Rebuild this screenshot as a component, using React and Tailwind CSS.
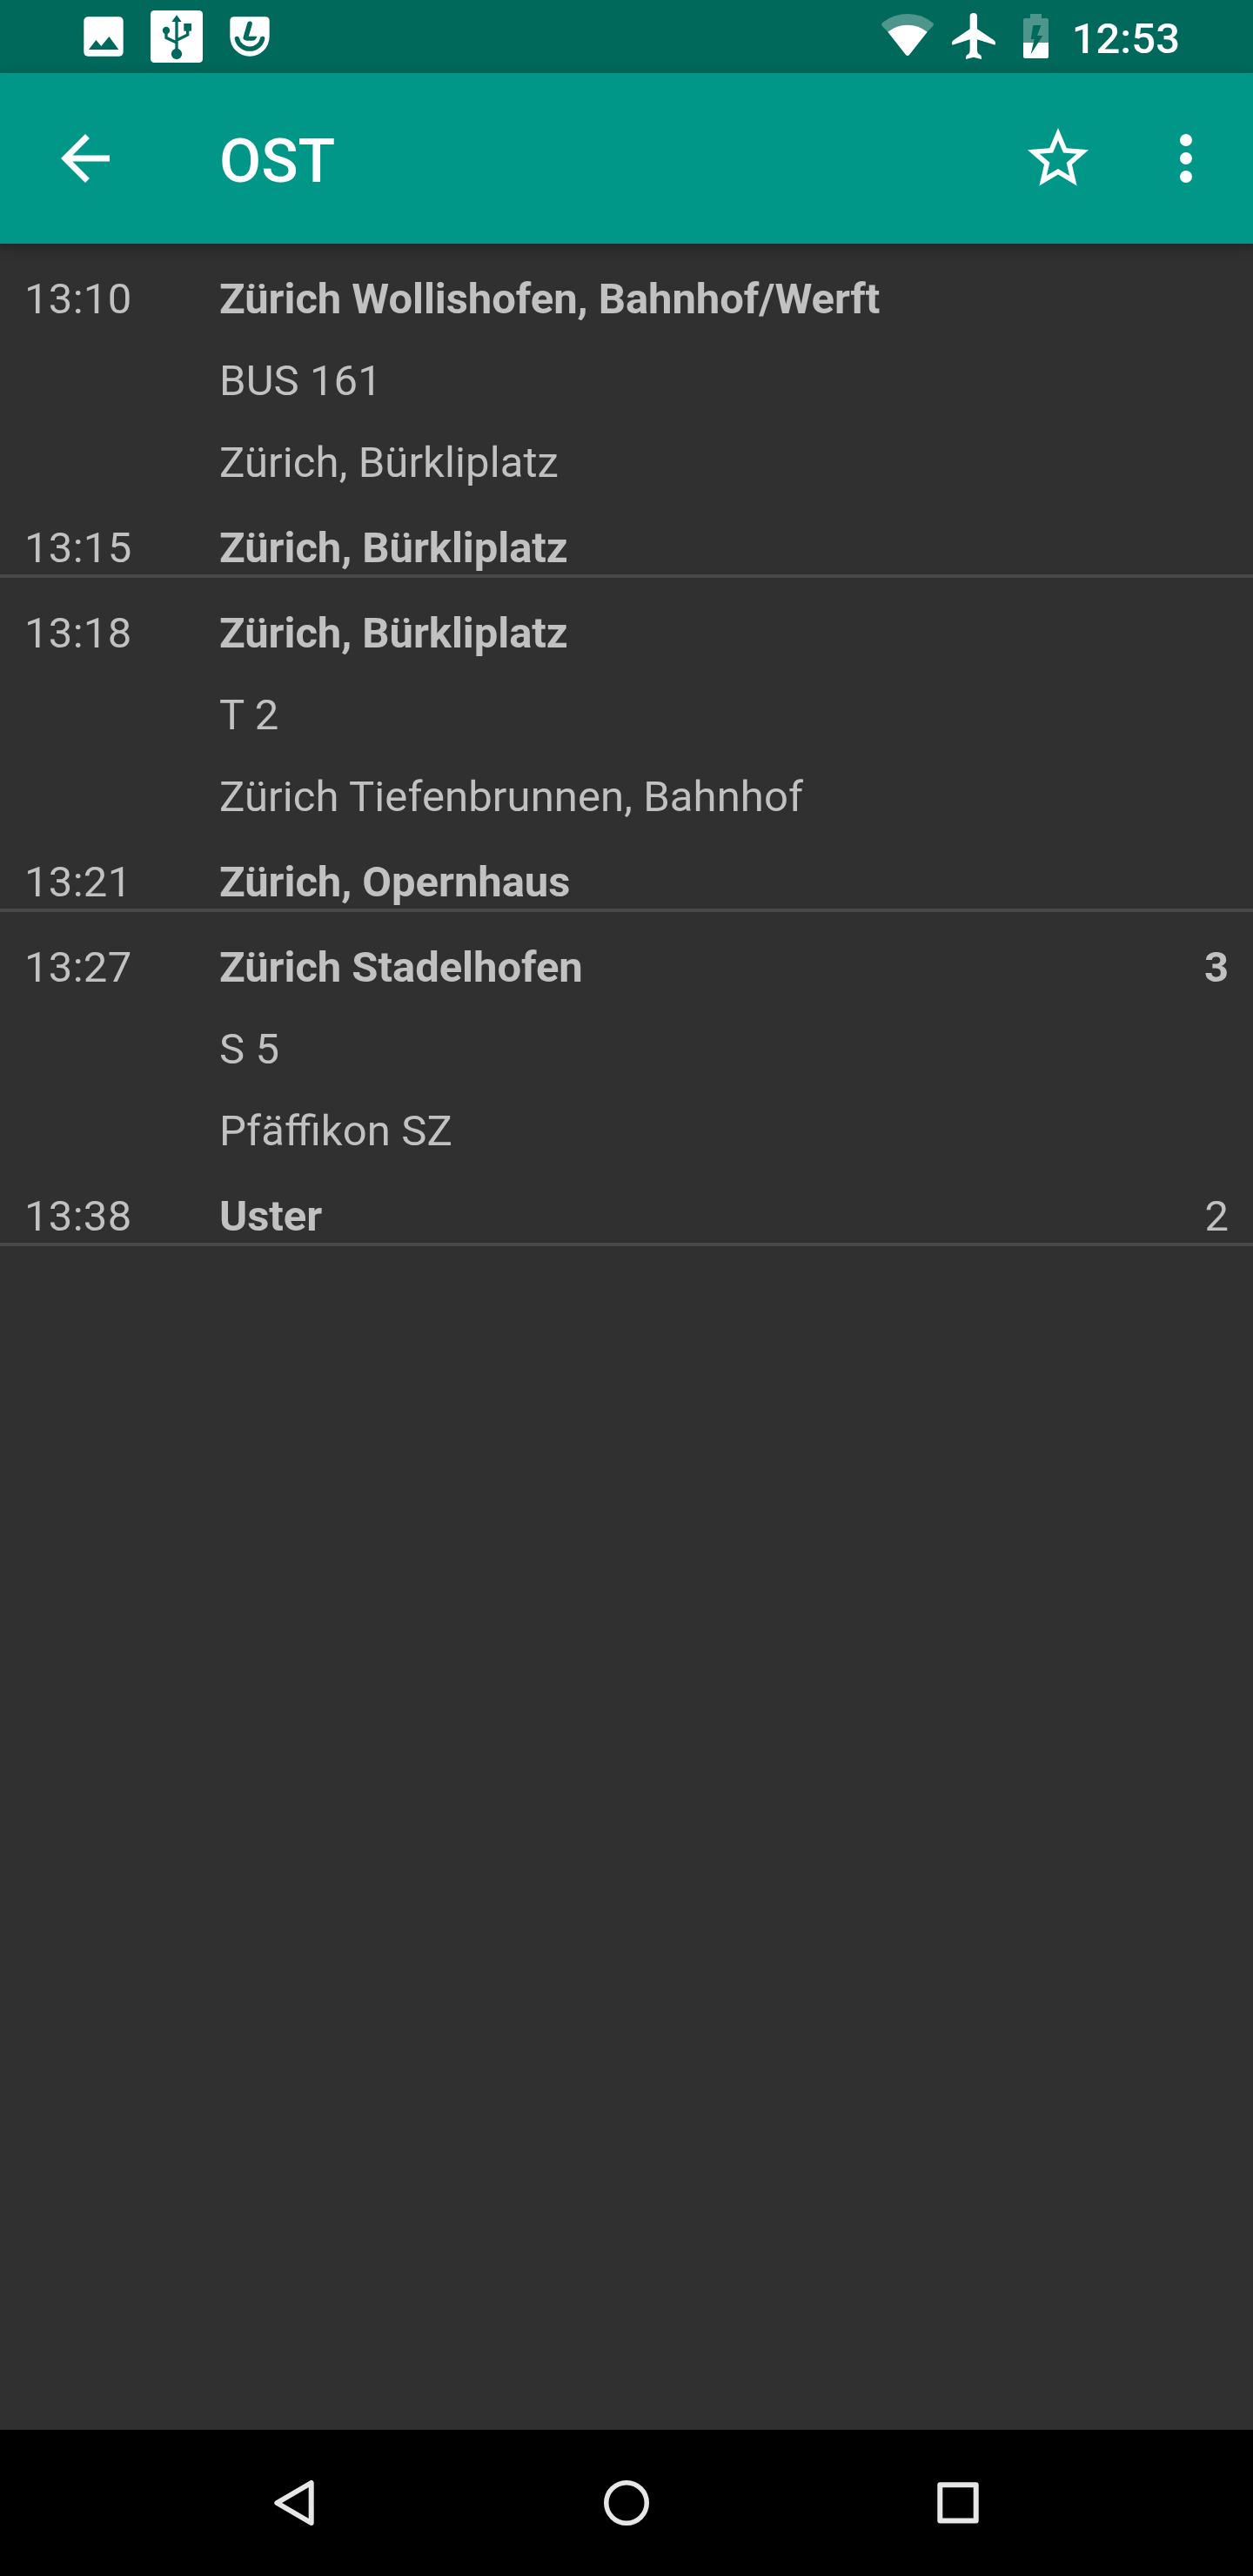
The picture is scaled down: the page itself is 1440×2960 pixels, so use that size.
const sections = [
  { dep: "13:10", from: "Zürich Wollishofen, Bahnhof/Werft", line: "BUS 161", dir: "Zürich, Bürkliplatz", arr: "13:15", to: "Zürich, Bürkliplatz" },
  { dep: "13:18", from: "Zürich, Bürkliplatz", line: "T 2", dir: "Zürich Tiefenbrunnen, Bahnhof", arr: "13:21", to: "Zürich, Opernhaus" },
  { dep: "13:27", from: "Zürich Stadelhofen", depTrack: "3", line: "S 5", dir: "Pfäffikon SZ", arr: "13:38", to: "Uster", arrTrack: "2" },
];

function ImageIcon() {
  return (
    <svg className="h-[46px] w-[46px]" viewBox="0 0 138 138">
      <rect x="1" y="1" width="136" height="136" rx="14" fill="#fff" />
      <path d="M18 114 43 81 61 102 88 69 121 114Z" fill="#00695c" />
    </svg>
  );
}

function UsbIcon() {
  return (
    <svg className="h-[60px] w-[60px]" viewBox="0 0 180 180">
      <rect width="180" height="180" rx="13" fill="#fff" />
      <g fill="#00695c">
        <path d="M90 16 107 39H73Z" />
        <circle cx="54" cy="69" r="12.5" />
        <rect x="115" y="45" width="26" height="26" />
        <circle cx="90" cy="150" r="18.5" />
      </g>
      <path d="M90 30V150M54 69V94L90 111M128 68V84L90 103" fill="none" stroke="#00695c" strokeWidth="10" />
    </svg>
  );
}

function SmileIcon() {
  return (
    <svg className="h-[46px] w-[46px]" viewBox="0 0 138 138">
      <path d="M1 69V15Q1 1 15 1H123Q137 1 137 15V69A68 68 0 0 1 1 69Z" fill="#fff" />
      <path d="M25 76A45 45 0 0 0 113 76" fill="none" stroke="#00695c" strokeWidth="16" strokeLinecap="round" />
      <path d="M69 25 55 73" fill="none" stroke="#00695c" strokeWidth="17" strokeLinecap="round" />
      <path d="M62 68H94Q90 83 78 83H56Z" fill="#00695c" />
    </svg>
  );
}

function WifiIcon() {
  return (
    <svg className="h-[48px] w-[60px]" viewBox="0 0 180 144">
      <path d="M3 31Q40 0 90 0T177 31Q182 36 178 41L157 63H23L2 41Q-2 36 3 31Z" fill="#4e968c" />
      <path d="M22 62Q52 38 90 38T158 62L96 141Q90 147 84 141Z" fill="#fff" />
    </svg>
  );
}

function PlaneIcon() {
  return (
    <svg className="h-[54px] w-[50px]" viewBox="0 0 150 162">
      <path d="M62 14Q62 3 74.500 3T87 14V58L145 97Q150 101 150 106V109Q150 114 144 112L87 94V132Q87 141 94 145Q102 149 102 156V162L74.500 155 48 162V156Q48 149 56 145Q62 141 62 132V94L6 112Q0 114 0 109V106Q0 101 5 97L62 58Z" fill="#fff" />
    </svg>
  );
}

function BatteryIcon() {
  return (
    <svg className="h-[51px] w-[29px]" viewBox="0 0 87 153">
      <path d="M24 0H63V15H81Q87 15 87 21V100H0V21Q0 15 6 15H24Z" fill="#4e968c" />
      <path d="M0 99H87V147Q87 153 81 153H6Q0 153 0 147Z" fill="#fff" />
      <path d="M34 39H61L48 75H67L26 139 38 87H26Z" fill="#00695c" />
    </svg>
  );
}

function StatusBar() {
  return (
    <div className="flex h-[84px] shrink-0 items-center justify-between bg-[#00695c] pl-[96px] pr-[84px]">
      <div className="flex items-center gap-[31px]">
        <ImageIcon />
        <UsbIcon />
        <SmileIcon />
      </div>
      <div className="flex items-center">
        <div className="mb-[4px] h-[48px]"><WifiIcon /></div>
        <div className="mb-[2px] ml-[21px]"><PlaneIcon /></div>
        <div className="mb-[1px] ml-[32px]"><BatteryIcon /></div>
        <div className="ml-[27px] mt-[6px] text-[49px] font-medium leading-[58px]">12:53</div>
      </div>
    </div>
  );
}

function AppBar() {
  return (
    <div className="z-10 flex h-[196px] shrink-0 items-center bg-[#009688] pl-[56px] pr-[35px] shadow-[0_4px_14px_rgba(0,0,0,0.3)]">
      <svg className="h-[84px] w-[84px]" viewBox="0 0 24 24" fill="#fff">
        <path d="M20 11H7.830l5.590-5.590L12 4l-8 8 8 8 1.410-1.410L7.830 13H20v-2z" />
      </svg>
      <h1 className="ml-[112px] mt-[6px] grow text-[70px] font-medium leading-[82px]">OST</h1>
      <svg className="h-[84px] w-[84px]" viewBox="0 0 24 24" fill="#fff">
        <path d="M22 9.240l-7.190-.62L12 2 9.190 8.630 2 9.240l5.460 4.730L5.820 21 12 17.270 18.180 21l-1.630-7.030L22 9.240zM12 15.400l-3.760 2.270 1-4.280-3.320-2.880 4.380-.38L12 6.100l1.710 4.040 4.380.38-3.320 2.880 1 4.280L12 15.400z" />
      </svg>
      <svg className="ml-[63px] h-[84px] w-[84px]" viewBox="0 0 24 24" fill="#fff">
        <circle cx="12" cy="6" r="2" />
        <circle cx="12" cy="12" r="2" />
        <circle cx="12" cy="18" r="2" />
      </svg>
    </div>
  );
}

function StopRow({ time, name, track, boldTrack }) {
  return (
    <div className="flex">
      <div className="w-[224px] tracking-[0.3px]">{time}</div>
      <div className="grow font-bold tracking-[-0.06px]">{name}</div>
      {track && <div className={boldTrack ? "font-bold" : "font-normal"}>{track}</div>}
    </div>
  );
}

function Section({ s }) {
  return (
    <div className="h-[384px] border-b-4 border-[#494949] px-[28px] pt-[35px] text-[49px] leading-[58px] text-[#c1c1c1] [font-feature-settings:'liga']">
      <StopRow time={s.dep} name={s.from} track={s.depTrack} boldTrack />
      <div className="mt-[36px] pl-[224px] tracking-[0.1px]">{s.line}</div>
      <div className="mb-[40px] mt-[36px] pl-[224px] tracking-[0.1px]">{s.dir}</div>
      <StopRow time={s.arr} name={s.to} track={s.arrTrack} />
    </div>
  );
}

function NavBar() {
  return (
    <div className="grid h-[168px] shrink-0 grid-cols-[381px_381px_381px] items-center justify-center justify-items-center bg-black">
      <svg className="h-[56px] w-[56px]" viewBox="0 0 56 56" fill="none" stroke="#e6e6e6" strokeWidth="6" strokeLinejoin="round">
        <path d="M46.700 5V51L7.300 28Z" />
      </svg>
      <svg className="h-[56px] w-[56px]" viewBox="0 0 56 56" fill="none" stroke="#e6e6e6" strokeWidth="5.500">
        <circle cx="28" cy="28" r="23.250" />
      </svg>
      <svg className="h-[56px] w-[56px]" viewBox="0 0 56 56" fill="none" stroke="#e6e6e6" strokeWidth="6" strokeLinejoin="round">
        <rect x="7.300" y="7.200" width="41.400" height="41.400" />
      </svg>
    </div>
  );
}

export default function App() {
  return (
    <div className="flex h-[2960px] w-[1440px] flex-col overflow-hidden bg-[#303030] font-['Roboto',sans-serif] text-white">
      <StatusBar />
      <AppBar />
      <div className="grow">
        {sections.map((s) => <Section key={s.dep} s={s} />)}
      </div>
      <NavBar />
    </div>
  );
}
